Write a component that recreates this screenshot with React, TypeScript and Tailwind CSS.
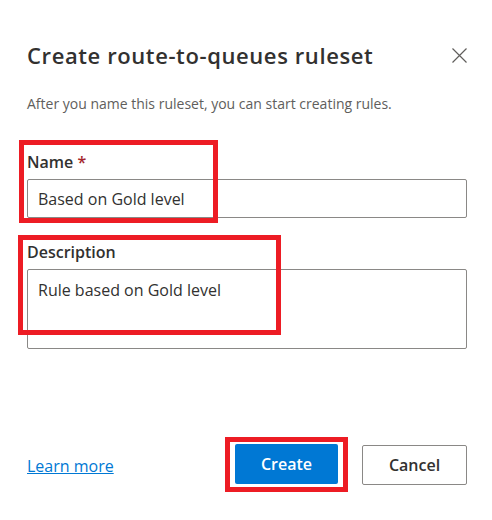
import React from "react";

export default function App() {
  return (
    <div
      className="relative w-[492px] h-[520px] bg-white overflow-hidden"
      style={{ fontFamily: '"Open Sans", "Noto Sans", sans-serif' }}
    >
      <div className="flex items-start justify-between pl-[27px] pr-[25px] pt-[41px]">
        <h1 className="text-[22px] leading-[28px] font-semibold tracking-[0.6px] text-[#323130]">
          Create route-to-queues ruleset
        </h1>
        <button className="mt-[7px] w-[15px] h-[15px] flex items-center justify-center" aria-label="Close">
          <svg width="15" height="15" viewBox="0 0 15 15" fill="none">
            <path d="M0.5 0.5 L14.5 14.5 M14.5 0.5 L0.5 14.5" stroke="#605e5c" strokeWidth="1.2" />
          </svg>
        </button>
      </div>

      <p className="pl-[27px] mt-[25px] text-[14px] leading-[20px] text-[#605e5c]">
        After you name this ruleset, you can start creating rules.
      </p>

      <div className="relative pl-[27px] pr-[25px] mt-[37px]">
        <div className="text-[16px] leading-[22px] font-semibold text-[#323130]">
          Name <span className="text-[#a4262c]">*</span>
        </div>
        <div className="mt-[6px] h-[39px] border border-[#8a8886] rounded-[2px] flex items-center pl-[10px] pt-[1px] text-[16px] leading-[22px] text-[#323130]">
          Based on Gold level
        </div>
        <div className="absolute left-[19px] top-[-11px] w-[199px] h-[83px] border-[5px] border-[#ed1c24] pointer-events-none" />
      </div>

      <div className="relative pl-[27px] pr-[25px] mt-[23px]">
        <div className="text-[16px] leading-[22px] font-semibold text-[#323130]">Description</div>
        <div className="mt-[6px] h-[80px] border border-[#8a8886] rounded-[2px] pl-[10px] pt-[9px] text-[16px] leading-[22px] text-[#323130]">
          Rule based on Gold level
        </div>
        <div className="absolute left-[18px] top-[-6px] w-[263px] h-[100px] border-[5px] border-[#ed1c24] pointer-events-none" />
      </div>

      <div className="flex items-center justify-between pl-[27px] pr-[25px] mt-[88px]">
        <a href="#" className="text-[16px] leading-[22px] text-[#0078d4] underline mt-[2px]">
          Learn more
        </a>
        <div className="flex items-center gap-[14px]">
          <div className="border-[5px] border-[#ed1c24] pt-[2px] pb-[3px] px-[5px]">
            <button className="w-[103px] h-[40px] bg-[#0078d4] rounded-[2px] text-white text-[16px] font-semibold">
              Create
            </button>
          </div>
          <button className="w-[105px] h-[40px] border border-[#8a8886] rounded-[2px] bg-white text-[#323130] text-[16px] font-semibold">
            Cancel
          </button>
        </div>
      </div>
    </div>
  );
}
